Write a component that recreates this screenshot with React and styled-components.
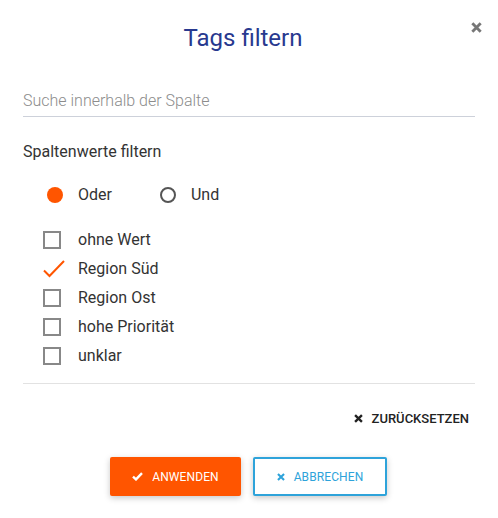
import React, { useState } from "react";
import styled, { createGlobalStyle } from "styled-components";

const Global = createGlobalStyle`
  html, body { margin: 0; padding: 0; background: #fff; }
  body { font-family: Roboto, "Noto Sans", Arial, sans-serif; color: #333; }
  * { box-sizing: border-box; }
`;

const Dialog = styled.div`
  width: 498px;
  height: 518px;
  background: #fff;
  padding-top: 22px;
  display: flex;
  flex-direction: column;
`;

const Header = styled.div`
  display: flex;
  align-items: flex-start;
  padding-left: 23px;
  padding-right: 9px;
`;

const Title = styled.h1`
  flex: 1;
  margin: 2px 0 0;
  text-align: center;
  font-size: 24px;
  line-height: 28px;
  font-weight: 400;
  color: #28398f;
`;

const CloseButton = styled.button`
  width: 26px;
  height: 11px;
  border: 0;
  background: none;
  padding: 0;
  display: flex;
  justify-content: center;
  color: #7a7a7a;
  cursor: pointer;
`;

const Body = styled.div`
  padding: 0 23px;
  display: flex;
  flex-direction: column;
`;

const SearchInput = styled.input`
  margin-top: 38px;
  width: 100%;
  height: 27px;
  border: 0;
  border-bottom: 1px solid #cdd1da;
  padding: 0 0 6px;
  font-family: inherit;
  font-size: 16px;
  line-height: 20px;
  font-weight: 300;
  color: #333;
  outline: none;
  &::placeholder { color: #8c8c8c; }
`;

const SectionLabel = styled.div`
  margin-top: 25px;
  font-size: 16px;
  line-height: 20px;
  color: #333;
`;

const RadioGroup = styled.div`
  margin-top: 23px;
  padding-left: 24px;
  display: flex;
  gap: 48px;
`;

const Option = styled.label`
  display: flex;
  align-items: center;
  height: ${p => p.$h || 20}px;
  font-size: 16px;
  line-height: 20px;
  color: #333;
  cursor: pointer;
`;

const RadioDot = styled.span`
  flex: none;
  width: 16px;
  height: 16px;
  border-radius: 50%;
  margin-right: 15px;
  background: ${p => (p.$on ? "#ff5500" : "transparent")};
  border: ${p => (p.$on ? "none" : "2px solid #555")};
`;

const CheckList = styled.div`
  margin-top: 20px;
  padding-left: 20px;
  display: flex;
  flex-direction: column;
`;

const Box = styled.span`
  flex: none;
  width: 18px;
  height: 18px;
  margin-right: 17px;
  border: 2px solid #888;
`;

const CheckMark = styled.svg`
  flex: none;
  width: 22px;
  height: 18px;
  margin-right: 13px;
`;

const Divider = styled.hr`
  margin: 13px 0 0;
  border: 0;
  border-top: 1px solid #e2e2e2;
`;

const ResetRow = styled.div`
  display: flex;
  justify-content: flex-end;
  margin-top: 24px;
`;

const ResetButton = styled.button`
  display: flex;
  align-items: center;
  gap: 9px;
  border: 0;
  background: none;
  padding: 0 6px 0 0;
  height: 20px;
  font-family: inherit;
  font-size: 13px;
  font-weight: 500;
  color: #222;
  text-transform: uppercase;
  cursor: pointer;
`;

const Actions = styled.div`
  margin-top: 29px;
  display: flex;
  justify-content: center;
  gap: 12px;
  padding-left: 1px;
  padding-right: 2px;
`;

const ActionButton = styled.button`
  height: 39px;
  width: ${p => p.$w}px;
  display: flex;
  align-items: center;
  justify-content: center;
  gap: 9px;
  font-family: inherit;
  font-size: 12px;
  font-weight: 400;
  letter-spacing: 0.1px;
  text-transform: uppercase;
  border-radius: 2px;
  cursor: pointer;
  box-shadow: 0 2px 6px rgba(0, 0, 0, 0.22);
  background: ${p => (p.$primary ? "#ff5500" : "#fff")};
  color: ${p => (p.$primary ? "#fff" : "#2ea3da")};
  border: ${p => (p.$primary ? "none" : "2px solid #2ea3da")};
`;

const XIcon = ({ size = 9, color = "currentColor", w = 2.6 }) => (
  <svg width={size} height={size} viewBox="0 0 10 10">
    <path d="M1.2 1.2 L8.8 8.8 M8.8 1.2 L1.2 8.8" stroke={color} strokeWidth={w} strokeLinecap="butt" />
  </svg>
);

const CheckIcon = () => (
  <svg width="11" height="9" viewBox="0 0 11 9">
    <path d="M1 4.6 L4 7.4 L10 1.2" stroke="#fff" strokeWidth="2.4" fill="none" />
  </svg>
);

const items = [
  { label: "ohne Wert", on: false },
  { label: "Region Süd", on: true },
  { label: "Region Ost", on: false },
  { label: "hohe Priorität", on: false },
  { label: "unklar", on: false },
];

export default function App() {
  const [mode, setMode] = useState("oder");
  return (
    <Dialog>
      <Global />
      <Header>
        <Title>Tags filtern</Title>
        <CloseButton aria-label="Schließen">
          <XIcon size={11} color="#777" w={2.6} />
        </CloseButton>
      </Header>
      <Body>
        <SearchInput placeholder="Suche innerhalb der Spalte" />
        <SectionLabel>Spaltenwerte filtern</SectionLabel>
        <RadioGroup>
          <Option onClick={() => setMode("oder")}>
            <RadioDot $on={mode === "oder"} />
            Oder
          </Option>
          <Option onClick={() => setMode("und")}>
            <RadioDot $on={mode === "und"} />
            Und
          </Option>
        </RadioGroup>
        <CheckList>
          {items.map(it => (
            <Option key={it.label} $h={29}>
              {it.on ? (
                <CheckMark viewBox="0 0 22 18">
                  <path d="M1 10.5 L6.5 16 L21 1" stroke="#ff5500" strokeWidth="2" fill="none" />
                </CheckMark>
              ) : (
                <Box />
              )}
              {it.label}
            </Option>
          ))}
        </CheckList>
        <Divider />
        <ResetRow>
          <ResetButton>
            <XIcon size={9} color="#222" w={2.6} />
            Zurücksetzen
          </ResetButton>
        </ResetRow>
        <Actions>
          <ActionButton $primary $w={131}>
            <CheckIcon />
            Anwenden
          </ActionButton>
          <ActionButton $w={134}>
            <XIcon size={8} color="#2ea3da" w={2.6} />
            Abbrechen
          </ActionButton>
        </Actions>
      </Body>
    </Dialog>
  );
}
